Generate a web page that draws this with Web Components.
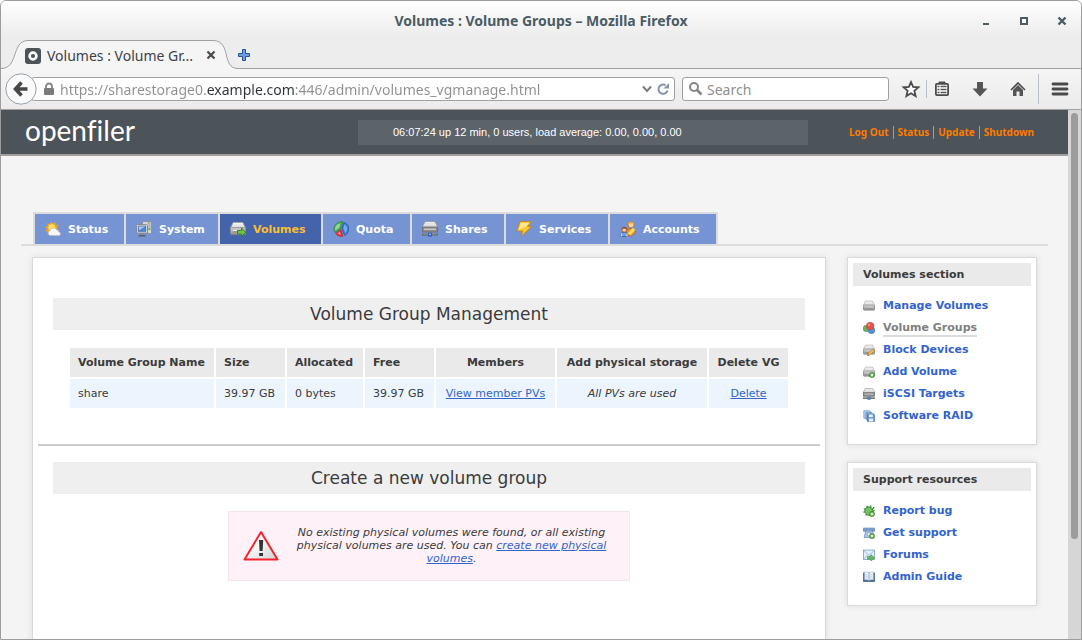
<!DOCTYPE html>
<html lang="en">
<head>
<meta charset="utf-8">
<title>Volumes : Volume Groups</title>
<style>
  html, body { margin: 0; height: 100%; background: #fff; }
  body { font-family: "DejaVu Sans", Verdana, sans-serif; font-size: 11px; color: #3b3b3b; }
</style>
</head>
<body>
<browser-window>
  <title-bar slot="chrome">Volumes : Volume Groups – Mozilla Firefox</title-bar>
  <tab-strip slot="chrome">Volumes : Volume Gr...</tab-strip>
  <nav-toolbar slot="chrome"></nav-toolbar>

  <page-header>06:07:24 up 12 min, 0 users, load average: 0.00, 0.00, 0.00</page-header>
  <nav-tabs>
    <nav-tab icon="weather">Status</nav-tab>
    <nav-tab icon="system">System</nav-tab>
    <nav-tab icon="drivego" active>Volumes</nav-tab>
    <nav-tab icon="pie">Quota</nav-tab>
    <nav-tab icon="drivenet">Shares</nav-tab>
    <nav-tab icon="bolt">Services</nav-tab>
    <nav-tab icon="users">Accounts</nav-tab>
  </nav-tabs>
  <page-columns>
    <section-title>Volume Group Management</section-title>
    <group-table></group-table>
    <section-rule></section-rule>
    <section-title>Create a new volume group</section-title>
    <warning-note></warning-note>

    <side-box slot="side" heading="Volumes section">
      <side-link icon="drive">Manage Volumes</side-link>
      <side-link icon="balls" current>Volume Groups</side-link>
      <side-link icon="driveedit">Block Devices</side-link>
      <side-link icon="driveadd">Add Volume</side-link>
      <side-link icon="drivenet">iSCSI Targets</side-link>
      <side-link icon="disks">Software RAID</side-link>
    </side-box>
    <side-box slot="side" heading="Support resources">
      <side-link icon="bug">Report bug</side-link>
      <side-link icon="phone">Get support</side-link>
      <side-link icon="mail">Forums</side-link>
      <side-link icon="book">Admin Guide</side-link>
    </side-box>
  </page-columns>
</browser-window>

<script>
const define = (name, html, setup) => {
  const template = document.createElement('template');
  template.innerHTML = html;
  customElements.define(name, class extends HTMLElement {
    static observedAttributes = ['name', 'icon', 'heading'];
    constructor() {
      super();
      this.attachShadow({ mode: 'open' }).append(template.content.cloneNode(true));
    }
    connectedCallback() { if (setup) setup(this, this.shadowRoot); }
    attributeChangedCallback() { if (setup) setup(this, this.shadowRoot); }
  });
};

/* Icons, all on a 16-unit grid */
const grad = (id, a, b) => `<linearGradient id="${id}" x1="0" y1="0" x2="0" y2="1"><stop offset="0" stop-color="${a}"/><stop offset="1" stop-color="${b}"/></linearGradient>`;
const drive = `<defs>${grad('m', '#f6f6f6', '#bdbdbd')}${grad('n', '#d2d2d2', '#8e8e8e')}</defs>
  <path d="M3.2 1.5h9.6l2.7 5.5v5.2H.5V7z" fill="url(#m)" stroke="#a5a5a5" stroke-width=".8"/>
  <rect x=".5" y="6.6" width="15" height="7" rx="1" fill="url(#n)" stroke="#888" stroke-width=".8"/>
  <path d="M3 9.7h10" stroke="#f2f2f2" stroke-width="1.2"/><path d="M3 10.7h10" stroke="#777" stroke-width=".8"/>`;
const plus = `<circle cx="12" cy="12" r="3.4" fill="#5aa83c" stroke="#33801f" stroke-width=".8"/><path d="M12 10v4M10 12h4" stroke="#fff" stroke-width="1.4"/>`;
const icons = {
  drive,
  driveadd: drive + plus,
  driveedit: drive + `<path d="M6 15.5l1-3.4 6.6-5.4 2 2.2-6.4 5.6z" fill="#f6c14b" stroke="#b07a24" stroke-width=".8"/><path d="M6 15.5l.6-2 1.4 1.4z" fill="#553"/><path d="M12.6 7.4l2.1 2.3" stroke="#e48a6b" stroke-width="1.2"/>`,
  drivego: drive + `<path d="M7.5 9.5h4V7l4.2 4.3-4.2 4.3V13h-4z" fill="#74c24c" stroke="#2f7d1d" stroke-width=".9"/>`,
  drivenet: `<defs>${grad('s', '#fafafa', '#b5b5b5')}</defs><path d="M3.2.6h9.6l2.6 4.6v5.4H.6V5.2z" fill="url(#s)" stroke="#8f8f8f" stroke-width=".8"/><path d="M2.8 2.8h10.4M2.2 4.6h11.6" stroke="#ddd"/><rect x=".6" y="6" width="14.8" height="5" fill="#8b8b8b" stroke="#6b6b6b" stroke-width=".8"/><path d="M2 8.2h12" stroke="#e2e2e2"/><path d="M0 13.5h16" stroke="#666" stroke-width="2"/><path d="M1 13h14" stroke="#aaa" stroke-width=".7"/><rect x="6" y="11.8" width="4" height="3.8" fill="#2c62bd"/><rect x="7.2" y="12.8" width="1.6" height="1.2" fill="#b9d4f5"/>`,
  weather: `<path d="M6.5.2l1.2 2.6L10.4.9l.1 3.2 3.2-.3-1.8 2.7 1.6 1L2.5 13.6l.2-2.8L.1 10l2-1.9L0 5.6l2.9-.4L2 2.2l3 .8z" fill="#f6a11f"/><circle cx="6.8" cy="6.6" r="3.9" fill="#ffe066" stroke="#f2a32a" stroke-width=".8"/><path d="M5.4 14.6a2.6 2.6 0 0 1-.2-5.1 3.4 3.4 0 0 1 6.3-.8 2.6 2.6 0 0 1 2.4 2.2 1.9 1.9 0 0 1 .2 3.7z" fill="#f7f7f7" stroke="#b9b9b9" stroke-width=".8"/>`,
  system: `<path d="M6.5.5h9v12h-4v-8h-5z" fill="#d9d9d9" stroke="#8a8a8a" stroke-width=".8"/><path d="M11.5 2h3M12.5 4h2M12.5 6h2M12.5 8h2" stroke="#777" stroke-width=".8"/><rect x="12.5" y="7.4" width="1.8" height="1.8" fill="#55b43a"/><rect x=".5" y="3.5" width="11" height="8.4" rx=".8" fill="#efefef" stroke="#7b7b7b" stroke-width=".8"/><rect x="2.1" y="5" width="7.8" height="5.3" fill="#4f86cf" stroke="#35659f" stroke-width=".7"/><path d="M2.6 5.4h6.8L3 9.3z" fill="#a9c9ee"/><path d="M4.4 12h3.2v1.7H4.4z" fill="#888"/><path d="M2.6 14.7h7" stroke="#5d5d5d" stroke-width="1.4"/>`,
  pie: `<path d="M7.6 7.5L2.200 11.600C-1 6.800 2.500.7 10 .5z" fill="#49b057" stroke="#2b7d39" stroke-width=".7"/><path d="M7.300 2.200L6.300 6.700 2.400 9.600C1.200 6 3.400 3 7.300 2.200z" fill="#b4e8b4" opacity=".7"/><path d="M11 1.500c6 1.500 6.500 10 .6 13L8.800 7.800z" fill="#3f7dd6" stroke="#1f4f9e" stroke-width=".7"/><path d="M11.400 3.500c3.200 1.500 3.500 6 1 8.500L10.400 7.600z" fill="#9cc3f4" opacity=".6"/><path d="M7.800 8.700l1.900 6.400c-2.500.8-5.200-.3-7-2.600z" fill="#ee3b33" stroke="#b21a18" stroke-width=".7"/><path d="M7 10.800l.8 3-3.200-1.300z" fill="#ffb0aa" opacity=".8"/>`,
  bolt: `<path d="M4 .7h11.300L11.600 5.600h4L5.200 15.300l1.600-5.300H.8z" fill="#fbc93a" stroke="#c98510" stroke-width=".9"/><path d="M4.800 1.700h8.200L9.800 5.800 2.800 8.800z" fill="#fff0a0" opacity=".8"/>`,
  users: `<path d="M6.500 12.500c.4-4 1.500-5 4.300-5s4.600 1.500 4.700 4l-4.500 4z" fill="#ec9a34" stroke="#a95c10" stroke-width=".7"/><path d="M7.500 12.700l5-6 3 2-5 5.500z" fill="#ffdb67" stroke="#d9a02c" stroke-width=".5"/><circle cx="11" cy="3.800" r="3" fill="#ffd29a" stroke="#b96a1d" stroke-width=".7"/><path d="M7.800 3.800C7.600.2 14.500-.6 14.200 4L12.800 2.600H9.500z" fill="#f4a51d"/><path d="M.6 15.500c-.3-3 1.300-4.500 3.600-4.500s3.800 1.500 3.600 4.500z" fill="#6f9fe0" stroke="#2a5594" stroke-width=".7"/><path d="M1.400 15.500v-3M7 15.500v-3" stroke="#ffcf9c" stroke-width="1.200"/><circle cx="4.300" cy="8.700" r="2.400" fill="#ffc995" stroke="#9a4d1b" stroke-width=".6"/><path d="M1.700 8.900C1.400 4.900 7.400 5 7 8.900L5.600 7.500H3.200z" fill="#8d3b16"/>`,
  balls: `<circle cx="4.600" cy="8.600" r="4.400" fill="#67b45c" stroke="#3f8a39" stroke-width=".6"/><circle cx="11.200" cy="11" r="4.600" fill="#5b8fcd" stroke="#3a6ba8" stroke-width=".6"/><circle cx="9.600" cy="5.200" r="5" fill="#e7514d" stroke="#b73835" stroke-width=".6"/><circle cx="8.200" cy="3.800" r="1.600" fill="#f7a09c"/>`,
  disks: `<path d="M1 1h8l2 2v8H1z" fill="#aecbec" stroke="#6f98c9" stroke-width=".9"/><path d="M4 3.500h8l2 2V13H4z" fill="#8fb6e3" stroke="#5684bd" stroke-width=".9"/><path d="M6 5.500h8.500l1 1V15.400H6z" fill="#6d9ad1" stroke="#3d6dab" stroke-width=".9"/><rect x="8" y="6" width="5" height="3.400" fill="#f0f5fb"/><rect x="8" y="11.400" width="5.600" height="4" fill="#e4edf8"/>`,
  bug: `<path d="M1 5l4 1M.5 9.500l4-.5M3.500 14l2.500-3M5 1l2 3.500M10.500.5l-.6 4M15 3l-3 3M15.500 7.500H12" stroke="#3c8d32" stroke-width="1.600"/><ellipse cx="8" cy="8.200" rx="5.400" ry="6" transform="rotate(-40 8 8.200)" fill="#66b957" stroke="#2f7a27" stroke-width=".9"/><path d="M5 5.500l5.500 5.500M4 8l4 4.500M7.500 4l4 4.500" stroke="#a9e09c" stroke-width=".9"/>` + plus,
  phone: `<path d="M.5 1.500h15v4h-3.600V4.300H4.100v1.200H.5z" fill="#7ea3d2" stroke="#4d74a8" stroke-width=".9"/><path d="M3.500 5.600h9l2 8.600h-13z" fill="#a9c3e2" stroke="#5f86b8" stroke-width=".9"/><circle cx="8" cy="9.800" r="2.300" fill="#f4f8fd" stroke="#6b8fc0" stroke-width=".7"/>` + plus,
  mail: `<rect x=".6" y="1.400" width="14.800" height="12.400" fill="#e3effb" stroke="#6f97c8" stroke-width="1"/><path d="M1 2l7 6.500L15 2M1 13.500l5-5.500M15 13l-5-5" fill="none" stroke="#85a9d6" stroke-width="1"/><path d="M6 10h4.500V7.500l5.200 4.500-5.200 4v-2.500H6z" fill="#6ab95b" stroke="#3b8930" stroke-width=".7"/>`,
  book: `<path d="M.5 2.500h15V14H.5z" fill="#3f6598" stroke="#2c4a75" stroke-width=".8"/><path d="M2 1.400c2.500-.6 4.600 0 6 1v10.400c-1.500-1-3.500-1.400-6-.9zM14 1.400c-2.500-.6-4.600 0-6 1v10.400c1.500-1 3.500-1.400 6-.9z" fill="#f1f5fa" stroke="#8aa3c4" stroke-width=".7"/><path d="M3.300 4.500l3 .6M3.300 6.700l3 .6M3.300 8.900l3 .6M12.700 4.500l-3 .6M12.700 6.700l-3 .6M12.700 8.900l-3 .6" stroke="#a9b7c9" stroke-width=".8"/>`
};

define('app-icon', `<style>
  :host { display: block; width: 16px; height: 16px; flex: none; }
  svg { display: block; width: 100%; height: 100%; }
</style><svg viewBox="0 0 16 16" fill="none" aria-hidden="true"></svg>`,
  (el, root) => { root.querySelector('svg').innerHTML = icons[el.getAttribute('name')] || ''; });

define('browser-window', `<style>
  :host { display: flex; flex-direction: column; box-sizing: border-box; height: 100vh; overflow: hidden;
    border: 1px solid #9c9c9c; border-radius: 6px 6px 0 0; background: #ededed; }
  .view { flex: 1; min-height: 0; display: flex; background: #f4f4f4; }
  .page { flex: 1; min-width: 0; overflow: hidden; }
  .track { width: 13px; box-sizing: border-box; padding: 3px 3px 0; background: #d6d6d6; }
  .thumb { height: 81%; border-radius: 4px; background: #9b9c9d; }
</style>
<slot name="chrome"></slot>
<div class="view"><div class="page"><slot></slot></div><div class="track"><div class="thumb"></div></div></div>`);

define('title-bar', `<style>
  :host { display: grid; grid-template-columns: 1fr auto 1fr; align-items: center; height: 39px; flex: none;
    background: linear-gradient(#fff, #ededed 34px);
    font: bold 14px "Noto Sans", "Open Sans", sans-serif; color: #4b5c64; }
  .title { grid-column: 2; }
  .buttons { display: flex; justify-content: flex-end; gap: 22px; padding-right: 11px; }
  button { border: 0; padding: 0; width: 16px; height: 16px; background: none; }
  svg { display: block; }
</style>
<span class="title"><slot></slot></span>
<div class="buttons">
  <button aria-label="Minimize"><svg width="16" height="16"><path d="M5 10h6v2H5z" fill="#4b5c64"/></svg></button>
  <button aria-label="Maximize"><svg width="16" height="16"><path d="M5 5h6v6H5z" fill="#fff" stroke="#4b5c64" stroke-width="2"/></svg></button>
  <button aria-label="Close"><svg width="16" height="16"><path d="M4.500 4.500l7 7M11.500 4.500l-7 7" stroke="#4b5c64" stroke-width="2.400"/></svg></button>
</div>`);

define('tab-strip', `<style>
  :host { display: flex; align-items: flex-end; height: 29px; flex: none; background: #ededed;
    box-shadow: inset 0 -1px #a0a0a0; font: 14px "Noto Sans", "Open Sans", sans-serif; color: #3c4245; }
  .tab { display: grid; width: 237px; height: 29px; }
  .tab > * { grid-area: 1 / 1; }
  .row { display: flex; align-items: center; padding: 2px 19px 0 24px; }
  .label { flex: 1; margin-left: 6px; white-space: nowrap; }
  button { border: 0; padding: 0; background: none; }
  svg { display: block; }
  .new { height: 29px; }
</style>
<div class="tab">
  <svg width="237" height="29"><path d="M0 29V28.500C16 28.500 12 .5 24 .5H214C230 .5 222 28.500 237 28.500V29z" fill="#f5f5f5"/><path d="M0 28.500C18 28.500 10 .5 27 .5H212C231 .5 220 28.500 237 28.500" fill="#f5f5f5" stroke="#a0a0a0"/></svg>
  <div class="row">
    <svg width="16" height="16"><rect width="16" height="16" rx="3" fill="#4c5359"/><circle cx="8" cy="8" r="3.400" fill="none" stroke="#fff" stroke-width="2.600"/></svg>
    <span class="label"><slot></slot></span>
    <button aria-label="Close tab"><svg width="16" height="16"><path d="M4.500 3.500l7 7M11.500 3.500l-7 7" stroke="#4a4a4a" stroke-width="2.200"/></svg></button>
  </div>
</div>
<button class="new" aria-label="New tab"><svg width="12" height="28"><path d="M4.500 8.500h3v4h4v3h-4v4h-3v-4h-4v-3h4z" fill="#6c9fd8" stroke="#23529b"/></svg></button>`);

define('nav-toolbar', `<style>
  :host { display: flex; align-items: center; box-sizing: border-box; height: 41px; flex: none; padding: 0 9px 0 4px;
    border-bottom: 1px solid #a0a0a0; background: linear-gradient(#f5f5f5, #ebebeb); font-family: "Noto Sans", "Open Sans", sans-serif; }
  button { border: 0; padding: 0; width: 24px; height: 24px; flex: none; background: none; }
  svg { display: block; flex: none; }
  .back { width: 32px; height: 32px; z-index: 1; }
  .field { display: flex; align-items: center; box-sizing: border-box; height: 24px; border: 1px solid #a0a0a0; border-radius: 3px; background: #fff; }
  .url { flex: 1; min-width: 0; margin: 0 7px 0 -6px; padding: 0 3px 0 11px; }
  .search { width: 207px; padding-left: 5px; margin-right: 10px; }
  input { flex: 1; min-width: 0; height: 22px; border: 0; padding: 0; outline: 0; background: none; color: #8f8f8f; font: 14px "Noto Sans", "Open Sans", sans-serif; }
  input::placeholder { color: #8f8f8f; opacity: 1; }
  /* the host's domain is drawn darker than the rest of the address */
  .address { margin-left: 5px; background: linear-gradient(90deg, #8f8f8f 147px, #2e3436 147px 235px, #8f8f8f 235px); -webkit-background-clip: text; background-clip: text; -webkit-text-fill-color: transparent; }
  .search input { margin-left: 4px; }
  .field button { width: 16px; height: 16px; }
  .sep { width: 1px; height: 18px; margin: 0 3px; background: #b9c0c7; }
  .sep.tall { height: 30px; margin: 0 9px 0 8px; }
  .gap { margin-left: 14px; }
</style>
<button class="back" aria-label="Back"><svg width="32" height="32"><circle cx="16" cy="16" r="15.200" fill="#fafafa" stroke="#98a0aa"/><path d="M22.500 16H11.500M16.500 9.500L10.500 16l6 6.500" fill="none" stroke="#474747" stroke-width="3.600"/></svg></button>
<div class="field url">
  <svg width="12" height="14"><path d="M3 7V4.500a3 3 0 0 1 6 0V7" fill="none" stroke="#858585" stroke-width="1.800"/><rect x="1" y="6" width="10" height="7" rx="1" fill="#7b7b7b"/></svg>
  <input class="address" aria-label="Address" value="https://sharestorage0.example.com:446/admin/volumes_vgmanage.html">
  <button aria-label="Show history"><svg width="16" height="16"><path d="M4 5.500l4 4.500 4-4.500" fill="none" stroke="#7d7d7d" stroke-width="2"/></svg></button>
  <button aria-label="Reload"><svg width="16" height="16"><path d="M12.500 9.500A4.600 4.600 0 1 1 10.500 4.300" fill="none" stroke="#8895a6" stroke-width="2"/><path d="M8.500 7.500h5.500V2z" fill="#8895a6"/></svg></button>
</div>
<div class="field search">
  <svg width="15" height="16"><circle cx="6" cy="6" r="4" fill="none" stroke="#858585" stroke-width="2"/><path d="M9 9l4.500 4.500" stroke="#858585" stroke-width="2.600"/></svg>
  <input type="search" aria-label="Search" placeholder="Search">
</div>
<button aria-label="Bookmark this page"><svg width="24" height="24"><path d="M12 5l2.100 4.900 5.300.4-4 3.500 1.200 5.200-4.600-2.800L7.400 19l1.200-5.200-4-3.500 5.300-.4z" fill="#fff" stroke="#4a4a4a" stroke-width="1.800"/></svg></button>
<div class="sep"></div>
<button aria-label="Bookmarks list"><svg width="24" height="24"><path d="M9 7V5h6v2" fill="#555" stroke="#4a4a4a"/><rect x="5.900" y="6.900" width="12.200" height="11.200" rx="1" fill="#fff" stroke="#4a4a4a" stroke-width="1.800"/><path d="M7.500 9.500h2M7.500 12.500h2M7.500 15.500h2M10.500 9.500h6M10.500 12.500h6M10.500 15.500h6" stroke="#555" stroke-width="1.400"/></svg></button>
<button class="gap" aria-label="Downloads"><svg width="24" height="24"><path d="M9 5h6v6.500h4.500L12 19.500l-7.500-8H9z" fill="#555"/></svg></button>
<button class="gap" aria-label="Home"><svg width="24" height="24"><path d="M5 13l7-7 7 7" fill="none" stroke="#4a4a4a" stroke-width="1.600"/><path d="M7 13l5-5 5 5v6h-3.500v-4.500h-3V19H7z" fill="#555"/></svg></button>
<div class="sep tall"></div>
<button aria-label="Menu"><svg width="24" height="24"><path d="M5 7h14M5 12h14M5 17h14" stroke="#4a4a4a" stroke-width="2.800" stroke-linecap="round"/></svg></button>`);

define('page-header', `<style>
  :host { display: grid; grid-template-columns: 357fr 450fr 260fr; align-items: center; height: 44px;
    background: #4c5359; border-bottom: 2px solid #9e9e9e; }
  .logo { padding-left: 24px; font: 28px/40px Lato, sans-serif; font-variant-ligatures: none; color: #fff; text-decoration: none; margin-bottom: 4px; }
  .load { height: 25px; box-sizing: border-box; padding-left: 35px; background: #5c6369; color: #fff; white-space: nowrap;
    font: 11px/25px "Liberation Sans", Arial, sans-serif; }
  nav { display: flex; justify-content: flex-end; padding-right: 30px; }
  nav a { padding: 0 4px; border-left: 1px solid #9ba0a3; color: #ff7b00; text-decoration: none; white-space: nowrap;
    font: bold 10px/13px "Noto Sans", "Open Sans", sans-serif; }
  nav a:first-child { border: 0; }
</style>
<a class="logo" href="#">openfiler</a>
<div class="load"><slot></slot></div>
<nav><a href="#">Log Out</a><a href="#">Status</a><a href="#">Update</a><a href="#">Shutdown</a></nav>`);

define('nav-tabs', `<style>
  :host { display: flex; margin: 56px 20px 0; padding-left: 12px; border-bottom: 2px solid #dcdcdc; }
  nav { display: grid; grid-template-columns: 89px 92px 101px 87px 92px 102px 106px; gap: 2px; padding: 2px 2px 0; background: #dcdcdc; }
</style><nav><slot></slot></nav>`);

define('nav-tab', `<style>
  :host { display: block; }
  a { display: flex; align-items: center; gap: 7px; height: 30px; padding-left: 10px; background: #7694d3;
    color: #fff; font-weight: bold; text-decoration: none; white-space: nowrap; }
  :host([active]) a { background: #4363ab; color: #f8c02f; }
</style><a href="#"><app-icon></app-icon><span><slot></slot></span></a>`,
  (el, root) => root.querySelector('app-icon').setAttribute('name', el.getAttribute('icon')));

define('page-columns', `<style>
  :host { display: flex; gap: 21px; margin: 11px 31px 0; }
  main { flex: 1; min-width: 0; box-sizing: border-box; min-height: 100vh; padding: 40px 20px; background: #fff; }
  aside { width: 190px; flex: none; display: flex; flex-direction: column; gap: 17px; }
  main { border: 1px solid #d9d9d9; box-shadow: 0 0 6px #ddd; }
</style><main><slot></slot></main><aside><slot name="side"></slot></aside>`);

define('section-title', `<style>
  :host { display: block; }
  h2 { margin: 0; background: #efefef; font-size: 17px; line-height: 32px; font-weight: normal; text-align: center; }
</style><h2><slot></slot></h2>`);

define('section-rule', `<style>
  :host { display: block; margin: 34px -15px 16px; }
  hr { margin: 0; border: 0; height: 2px; background: #ccc; }
</style><hr>`);

define('group-table', `<style>
  :host { display: block; margin-top: 16px; }
  table { margin: 0 auto; width: 722px; max-width: 100%; table-layout: fixed; border-collapse: separate; border-spacing: 2px; }
  th, td { height: 29px; box-sizing: border-box; padding: 0 0 0 8px; white-space: nowrap; text-align: left; }
  th { background: #eaeaea; }
  td { background: #ecf5fd; }
  .mid { padding: 0; text-align: center; }
  a { color: #3264cb; }
</style>
<table>
  <colgroup><col width="144"><col width="69"><col width="76"><col width="69"><col width="119"><col width="150"><col width="79"></colgroup>
  <thead><tr><th>Volume Group Name</th><th>Size</th><th>Allocated</th><th>Free</th><th class="mid">Members</th><th class="mid">Add physical storage</th><th class="mid">Delete VG</th></tr></thead>
  <tbody><tr><td>share</td><td>39.97 GB</td><td>0 bytes</td><td>39.97 GB</td><td class="mid"><a href="#">View member PVs</a></td><td class="mid"><em>All PVs are used</em></td><td class="mid"><a href="#">Delete</a></td></tr></tbody>
</table>`);

define('warning-note', `<style>
  :host { display: grid; grid-template-columns: 56px 1fr; align-items: center; box-sizing: border-box; width: 402px; height: 70px;
    margin: 17px auto 0; padding-right: 11px; border: 1px solid #f4e3ea; background: #fef1f8; }
  svg { display: block; margin-left: 14px; }
  p { margin: 0 0 2px; font-style: italic; line-height: 13px; text-align: center; }
  a { color: #3264cb; }
</style>
<svg width="36" height="32" viewBox="0 0 36 32"><defs><linearGradient id="w" x1="0" y1="0" x2="1" y2="1"><stop offset=".3" stop-color="#fff"/><stop offset="1" stop-color="#cfd3d3"/></linearGradient></defs><path d="M18 2L34.500 29.500H1.500z" fill="url(#w)" stroke="#f5222d" stroke-width="2" stroke-linejoin="round"/><path d="M16 10h4.200l-.6 11h-3zM16.200 23h3.800v3h-3.800z" fill="#333"/></svg>
<p>No existing physical volumes were found, or all existing physical volumes are used. You can <a href="#">create new physical volumes</a>.</p>`);

define('side-box', `<style>
  :host { display: block; padding: 5px 5px 17px; border: 1px solid #d9d9d9; background: #fff; box-shadow: 0 0 6px #ddd; }
  h3 { margin: 0 0 9px; padding-left: 10px; background: #eaeaea; font-size: 11px; line-height: 23px; }
</style><h3></h3><nav><slot></slot></nav>`,
  (el, root) => { root.querySelector('h3').textContent = el.getAttribute('heading'); });

define('side-link', `<style>
  :host { display: flex; align-items: center; gap: 8px; height: 22px; padding-left: 10px; }
  app-icon { width: 12px; height: 12px; }
  a { color: #3264cb; font-weight: bold; line-height: 14px; text-decoration: none; white-space: nowrap; }
  :host([current]) a { color: #808080; box-shadow: 0 2px #dcdcdc; }
</style><app-icon></app-icon><a href="#"><slot></slot></a>`,
  (el, root) => root.querySelector('app-icon').setAttribute('name', el.getAttribute('icon')));
</script>
</body>
</html>
